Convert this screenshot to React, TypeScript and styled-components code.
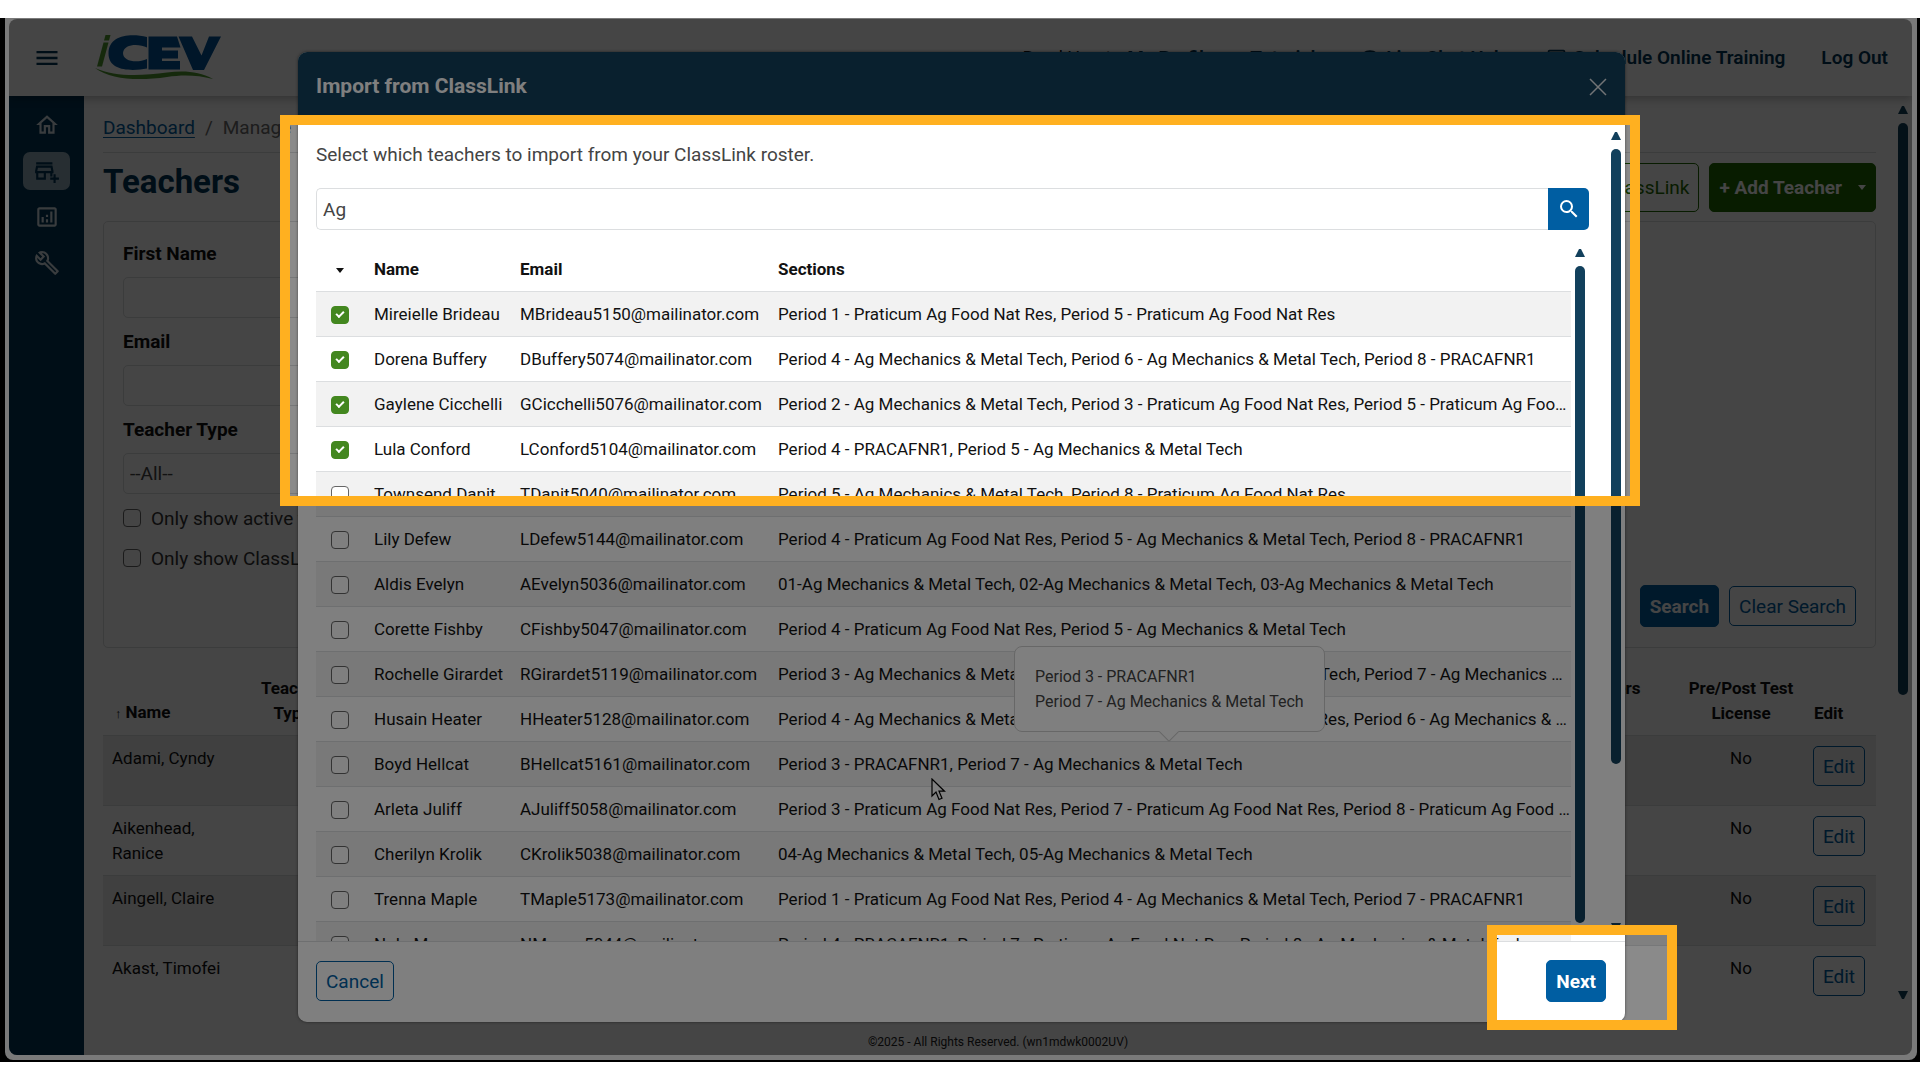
import React from "react";
import styled, { createGlobalStyle, css } from "styled-components";
import {
  MdMenu,
  MdOutlineHome,
  MdOutlineAddBusiness,
  MdOutlineAnalytics,
  MdOutlineBuild,
  MdSearch,
  MdOutlineMonitor,
} from "react-icons/md";
import { FaComment } from "react-icons/fa";

const color = {
  navy: "#003455",
  header: "#12405c",
  blue: "#005ea2",
  green: "#1f6900",
  check: "#43871f",
  line: "#dcdee0",
  stripe: "#f2f2f2",
  accent: "#ffb020",
};

const GlobalStyle = createGlobalStyle`
  *, *::before, *::after { box-sizing: border-box; }
  body {
    margin: 0;
    background: #fff;
    color: #111;
    font: 17px/25px Roboto, "Liberation Sans", sans-serif;
    overflow: hidden;
  }
  button, input, select { font-family: inherit; }
`;

/* ---------- window frame ---------- */

const Stage = styled.div`
  position: relative;
  height: 100vh;
  padding: 18px 0;
`;

const Bezel = styled.div`
  height: 100%;
  padding: 0 3px 2px 5px;
  background: #000;
`;

const Rim = styled.div`
  height: 100%;
  padding: 1px 5px 5px 4px;
  background: #f4f4f4;
  border-radius: 0 0 8px 8px;
`;

const Window = styled.div`
  position: relative;
  display: flex;
  flex-direction: column;
  height: 100%;
  overflow: hidden;
  background: #fff;
  border-radius: 8px;
`;

/* ---------- top bar ---------- */

const TopBar = styled.header`
  display: flex;
  align-items: center;
  flex: 0 0 77px;
  padding: 0 24px;
  box-shadow: 0 3px 8px rgba(0, 0, 0, 0.25);
  z-index: 1;
`;

const IconButton = styled.button`
  display: flex;
  padding: 0;
  border: 0;
  background: none;
  color: ${color.navy};
`;

const Logo = styled.svg`
  width: 128px;
  height: 48px;
  margin-left: 34px;
`;

const TopNav = styled.nav`
  display: flex;
  align-items: center;
  gap: 36px;
  margin-left: auto;
  font-size: 19px;
`;

const UserName = styled.span`
  margin-right: -20px;
  font-size: 18px;
`;

const TopLink = styled.a`
  display: flex;
  align-items: center;
  gap: 7px;
  color: ${color.navy};
  font-weight: 600;
  text-decoration: none;
`;

/* ---------- side bar ---------- */

const Shell = styled.div`
  display: flex;
  flex: 1;
  min-height: 0;
`;

const SideBar = styled.nav`
  display: flex;
  flex-direction: column;
  align-items: center;
  flex: 0 0 75px;
  gap: 8px;
  padding-top: 10px;
  background: ${color.navy};
`;

const SideLink = styled.a<{ $active?: boolean }>`
  display: flex;
  align-items: center;
  justify-content: center;
  width: 47px;
  height: 38px;
  border-radius: 7px;
  font-size: 26px;
  color: ${(p) => (p.$active ? color.navy : "#d5dfe6")};
  background: ${(p) => (p.$active ? "#93abbb" : "transparent")};
`;

/* ---------- page ---------- */

const Main = styled.main`
  display: flex;
  flex-direction: column;
  flex: 1;
  min-width: 0;
`;

const Scroller = styled.div`
  display: flex;
  flex: 1;
  min-height: 0;
`;

const Content = styled.div`
  flex: 1;
  min-width: 0;
  padding: 19px 22px 0 19px;
  overflow: hidden;
`;

const Breadcrumb = styled.nav`
  display: flex;
  gap: 10px;
  padding-bottom: 12px;
  border-bottom: 1px solid ${color.line};
  font-size: 19px;
  color: #6b6b6b;

  a {
    color: ${color.blue};
    text-underline-offset: 3px;
  }
`;

const TitleRow = styled.div`
  display: flex;
  align-items: center;
  gap: 10px;
  height: 68px;
`;

const PageTitle = styled.h1`
  flex: 1;
  margin: 0;
  padding-bottom: 10px;
  font-size: 33px;
  line-height: 40px;
  font-weight: 700;
  color: ${color.navy};
`;

const Button = styled.button<{ $tone?: "blue" | "green"; $solid?: boolean; $tall?: boolean }>`
  display: inline-flex;
  align-items: center;
  gap: 16px;
  height: ${(p) => (p.$tall ? 49 : p.$solid ? 42 : 40)}px;
  padding: 0 9px;
  font-size: 19px;
  font-weight: ${(p) => (p.$solid ? 700 : 400)};
  border-radius: 5px;
  white-space: nowrap;
  ${(p) => {
    const c = p.$tone === "green" ? color.green : color.blue;
    return p.$solid
      ? css`
          color: #fff;
          background: ${c};
          border: 1px solid ${c};
        `
      : css`
          color: ${c};
          background: transparent;
          border: 1px solid ${c};
        `;
  }}
`;

const Caret = styled.span`
  display: inline-block;
  border: 4px solid transparent;
  border-top: 5px solid currentColor;
  border-bottom: 0;
  vertical-align: middle;
`;

const FilterPanel = styled.form`
  display: flex;
  flex-direction: column;
  height: 427px;
  padding: 19px 19px 20px;
  border: 1px solid ${color.line};
  border-radius: 5px;
`;

const Field = styled.label<{ $last?: boolean }>`
  display: flex;
  flex-direction: column;
  gap: 11px;
  width: 30%;
  padding-bottom: ${(p) => (p.$last ? 4 : 11)}px;
  font-size: 19px;
  font-weight: 700;
`;

const controlStyle = css`
  width: 100%;
  height: 41px;
  padding: 0 6px;
  border: 1px solid ${color.line};
  border-radius: 5px;
  background: #fff;
  color: #444;
  font-size: 19px;
  appearance: none;
`;

const TextBox = styled.input`
  ${controlStyle}
`;

const DropDown = styled.select`
  ${controlStyle}
`;

const Tick = styled.input.attrs({ type: "checkbox" })`
  appearance: none;
  display: inline-flex;
  align-items: center;
  justify-content: center;
  width: 18px;
  height: 18px;
  margin: 0;
  border: 1px solid #666;
  border-radius: 4px;
  background: #fff;
  vertical-align: middle;

  &:checked {
    border-color: ${color.check};
    background: ${color.check};
  }

  &:checked::after {
    content: "";
    width: 8px;
    height: 5px;
    margin-bottom: 3px;
    border: solid #fff;
    border-width: 0 0 2px 2px;
    transform: rotate(-45deg);
  }
`;

const TickLabel = styled.label`
  display: flex;
  align-items: center;
  gap: 10px;
  height: 40px;
  font-size: 19px;
  color: #333;
`;

const FilterActions = styled.div`
  display: flex;
  align-items: center;
  justify-content: flex-end;
  gap: 10px;
  margin-top: auto;
`;

const TeacherTable = styled.table`
  width: 100%;
  margin-top: 24px;
  border-collapse: separate;
  border-spacing: 0;
  table-layout: fixed;

  th {
    padding: 4px 8px 9px;
    text-align: center;
    vertical-align: bottom;
    font-weight: 700;
  }

  th:first-child,
  th:last-child,
  td:first-child {
    text-align: left;
  }

  th:last-child {
    padding-left: 12px;
  }

  td {
    height: 70px;
    padding: 10px 9px 9px;
    border-top: 1px solid ${color.line};
    text-align: center;
    vertical-align: top;
  }

  tbody tr:nth-child(odd) {
    background: #ececec;
  }
`;

const SortMark = styled.span`
  display: inline-block;
  margin: 0 4px;
  font-size: 13px;
`;

const Footer = styled.footer`
  flex: 0 0 53px;
  padding-top: 28px;
  text-align: center;
  font-size: 12px;
  color: #222;
`;

/* ---------- scroll bars ---------- */

const Track = styled.div<{ $top: number; $bottom?: number }>`
  display: flex;
  flex-direction: column;
  align-items: center;
  flex: 0 0 10px;
  gap: 9px;
  padding-top: ${(p) => p.$top}px;
  padding-bottom: ${(p) => p.$bottom ?? 0}px;
`;

const ArrowMark = styled.i<{ $down?: boolean }>`
  flex: none;
  width: 10px;
  height: 8px;
  background: ${color.header};
  clip-path: ${(p) =>
    p.$down ? "polygon(0 0, 100% 0, 60% 100%, 40% 100%)" : "polygon(40% 0, 60% 0, 100% 100%, 0 100%)"};
`;

const Thumb = styled.i<{ $share: number }>`
  flex: 0 0 ${(p) => p.$share}%;
  width: 10px;
  border-radius: 5px;
  background: ${color.header};
`;

const Spring = styled.i`
  flex: 1;
`;

const PageTrack = styled(Track)`
  margin-right: 4px;
`;

/* ---------- dialog ---------- */

const Backdrop = styled.div`
  position: absolute;
  inset: 0;
  z-index: 2;
  display: flex;
  justify-content: center;
  padding: 33px 32px 33px 34px;
  background: rgba(0, 0, 0, 0.46);
`;

const Dialog = styled.section`
  position: relative;
  display: flex;
  flex-direction: column;
  width: 100%;
  max-width: 1327px;
  overflow: hidden;
  background: #fff;
  border-radius: 9px;
  box-shadow: 0 0 3px rgba(0, 0, 0, 0.5);
`;

const DialogHeader = styled.header`
  display: flex;
  align-items: center;
  justify-content: space-between;
  flex: 0 0 69px;
  padding: 0 18px;
  background: ${color.header};
  color: #fff;

  h2 {
    margin: 0;
    font-size: 21px;
    font-weight: 700;
  }
`;

const CloseIcon = styled.svg`
  width: 18px;
  height: 18px;
  color: #e4e9ec;
`;

const DialogBody = styled.div`
  display: flex;
  flex: 1;
  min-height: 0;
`;

const DialogContent = styled.div`
  display: flex;
  flex-direction: column;
  flex: 1;
  min-width: 0;
  padding: 21px 22px 0 18px;
`;

const Intro = styled.p`
  margin: 0 0 21px;
  font-size: 19px;
  color: #444;
`;

const SearchBar = styled.form`
  display: flex;
  flex: none;
  margin-bottom: 17px;

  input {
    height: 42px;
    border-right: 0;
    border-radius: 5px 0 0 5px;
  }

  button {
    display: flex;
    align-items: center;
    justify-content: center;
    flex: 0 0 41px;
    padding: 0;
    border: 0;
    border-radius: 0 5px 5px 0;
    background: ${color.blue};
    color: #fff;
    font-size: 24px;
  }
`;

const RosterArea = styled.div`
  display: flex;
  flex: 1;
  gap: 4px;
  min-height: 0;
  padding-right: 4px;
`;

const RosterClip = styled.div`
  flex: 1;
  min-width: 0;
  overflow: hidden;
`;

const Roster = styled.table`
  width: 100%;
  border-collapse: separate;
  border-spacing: 0;
  table-layout: fixed;

  th,
  td {
    height: 45px;
    padding: 0 1px 0 10px;
    border-bottom: 1px solid ${color.line};
    text-align: left;
    white-space: nowrap;
    overflow: hidden;
    text-overflow: ellipsis;
  }

  th:first-child,
  td:first-child {
    padding: 0;
    text-align: center;
  }

  th {
    font-weight: 700;
  }

  tbody tr:nth-child(odd) {
    background: ${color.stripe};
  }
`;

const DialogTrack = styled(Track)`
  margin-right: 4px;
`;

const DialogFooter = styled.footer`
  display: flex;
  align-items: center;
  justify-content: space-between;
  flex: 0 0 81px;
  padding: 0 19px 2px 18px;
  border-top: 1px solid ${color.line};
`;

const Tooltip = styled.div`
  position: absolute;
  left: 716px;
  top: 594px;
  padding: 17px 20px;
  border: 1px solid #cfcfcf;
  border-radius: 8px;
  background: #fff;
  color: #444;
  font-size: 16px;

  &::after {
    content: "";
    position: absolute;
    left: 50%;
    bottom: -8px;
    width: 14px;
    height: 14px;
    margin-left: -7px;
    background: #fff;
    border: solid #cfcfcf;
    border-width: 0 1px 1px 0;
    transform: rotate(45deg);
  }
`;

const Pointer = styled.svg`
  position: absolute;
  left: 633px;
  top: 726px;
  width: 15px;
  height: 23px;
`;

/* ---------- walkthrough overlay ---------- */

type Spot = { x: number; y: number; w: number; h: number };

const spots: Spot[] = [
  { x: 280, y: 115, w: 1360, h: 391 },
  { x: 1487, y: 925, w: 190, h: 105 },
];

const holes = spots
  .map(({ x, y, w, h }) => `M${x} ${y - 18}h${w}v${h}h${-w}z`)
  .join(" ");

const Shade = styled.div`
  position: absolute;
  inset: 18px 0;
  z-index: 3;
  background: rgba(0, 0, 0, 0.5);
  clip-path: path(evenodd, "M0 0H4000V4000H0z ${holes}");
  pointer-events: none;
`;

const SpotFrame = styled.div<{ $spot: Spot }>`
  position: absolute;
  z-index: 4;
  left: ${(p) => p.$spot.x}px;
  top: ${(p) => p.$spot.y}px;
  width: ${(p) => p.$spot.w}px;
  height: ${(p) => p.$spot.h}px;
  border: 10px solid ${color.accent};
  pointer-events: none;
`;

/* ---------- data ---------- */

const roster: [string, string, string, boolean?][] = [
  ["Mireielle Brideau", "MBrideau5150", "Period 1 - Praticum Ag Food Nat Res, Period 5 - Praticum Ag Food Nat Res", true],
  ["Dorena Buffery", "DBuffery5074", "Period 4 - Ag Mechanics & Metal Tech, Period 6 - Ag Mechanics & Metal Tech, Period 8 - PRACAFNR1", true],
  ["Gaylene Cicchelli", "GCicchelli5076", "Period 2 - Ag Mechanics & Metal Tech, Period 3 - Praticum Ag Food Nat Res, Period 5 - Praticum Ag Food Nat Res", true],
  ["Lula Conford", "LConford5104", "Period 4 - PRACAFNR1, Period 5 - Ag Mechanics & Metal Tech", true],
  ["Townsend Danit", "TDanit5040", "Period 5 - Ag Mechanics & Metal Tech, Period 8 - Praticum Ag Food Nat Res"],
  ["Lily Defew", "LDefew5144", "Period 4 - Praticum Ag Food Nat Res, Period 5 - Ag Mechanics & Metal Tech, Period 8 - PRACAFNR1"],
  ["Aldis Evelyn", "AEvelyn5036", "01-Ag Mechanics & Metal Tech, 02-Ag Mechanics & Metal Tech, 03-Ag Mechanics & Metal Tech"],
  ["Corette Fishby", "CFishby5047", "Period 4 - Praticum Ag Food Nat Res, Period 5 - Ag Mechanics & Metal Tech"],
  ["Rochelle Girardet", "RGirardet5119", "Period 3 - Ag Mechanics & Metal Tech, Period 5 - Ag Mechanics & Metal Tech, Period 7 - Ag Mechanics & Metal Tech"],
  ["Husain Heater", "HHeater5128", "Period 4 - Ag Mechanics & Metal Tech, Period 5 - Praticum Ag Food Nat Res, Period 6 - Ag Mechanics & Metal Tech"],
  ["Boyd Hellcat", "BHellcat5161", "Period 3 - PRACAFNR1, Period 7 - Ag Mechanics & Metal Tech"],
  ["Arleta Juliff", "AJuliff5058", "Period 3 - Praticum Ag Food Nat Res, Period 7 - Praticum Ag Food Nat Res, Period 8 - Praticum Ag Food Nat Res"],
  ["Cherilyn Krolik", "CKrolik5038", "04-Ag Mechanics & Metal Tech, 05-Ag Mechanics & Metal Tech"],
  ["Trenna Maple", "TMaple5173", "Period 1 - Praticum Ag Food Nat Res, Period 4 - Ag Mechanics & Metal Tech, Period 7 - PRACAFNR1"],
  ["Nola Mason", "NMason5044", "Period 4 - PRACAFNR1, Period 7 - Praticum Ag Food Nat Res, Period 8 - Ag Mechanics & Metal Tech"],
];

const teachers = ["Adami, Cyndy", "Aikenhead, Ranice", "Aingell, Claire", "Akast, Timofei"];

const ScrollMarks = ({ share }: { share: number }) => (
  <>
    <ArrowMark />
    <Thumb $share={share} />
    <Spring />
    <ArrowMark $down />
  </>
);

const IcevLogo = () => (
  <Logo viewBox="0 0 128 48" role="img" aria-label="iCEV">
    <g fill="#4f9a2f">
      <path d="M10.500 1h5L14 6.500H9z" />
      <path d="M8.500 8.500h5L7 32.500H2z" />
      <path d="M0 34C20 43 46 42 72 38.500c18-2 32-1 46 6.500C102 41 88 40.500 72 43 44 47 16 46 0 34z" />
    </g>
    <g fill="#00549a">
      <path d="M52 3v10.500C44 9.500 29 9.500 28 19c0 8.500 14 10.500 24 6v9.500C36 37.500 13.500 37 13.500 19.500 13.500 1 35-1 52 3z" />
      <path d="M53.500 2.500H82l3.500 11H67v3h16v8H67v2.500h18v8.500H53.500z" />
      <path d="M83.500 2.500H97l9.500 19L114 2.500h12L109 36H98z" />
    </g>
  </Logo>
);

export default function App() {
  return (
    <Stage>
      <GlobalStyle />
      <Bezel>
        <Rim>
          <Window>
            <TopBar>
              <IconButton aria-label="Menu">
                <MdMenu size={28} />
              </IconButton>
              <IcevLogo />
              <TopNav>
                <UserName>Reed Hurst</UserName>
                <TopLink href="#profile">My Profile</TopLink>
                <TopLink href="#tutorials">Tutorials</TopLink>
                <TopLink href="#chat">
                  <FaComment size={18} />
                  Live Chat Help
                </TopLink>
                <TopLink href="#training">
                  <MdOutlineMonitor size={21} />
                  Schedule Online Training
                </TopLink>
                <TopLink href="#logout">Log Out</TopLink>
              </TopNav>
            </TopBar>

            <Shell>
              <SideBar aria-label="Sections">
                <SideLink href="#home" aria-label="Home"><MdOutlineHome /></SideLink>
                <SideLink href="#manage" aria-label="Manage" $active><MdOutlineAddBusiness /></SideLink>
                <SideLink href="#reports" aria-label="Reports"><MdOutlineAnalytics /></SideLink>
                <SideLink href="#tools" aria-label="Tools"><MdOutlineBuild /></SideLink>
              </SideBar>

              <Main>
                <Scroller>
                  <Content>
                    <Breadcrumb>
                      <a href="#dashboard">Dashboard</a>
                      <span>/</span>
                      <span>Manage Teachers</span>
                    </Breadcrumb>
                    <TitleRow>
                      <PageTitle>Teachers</PageTitle>
                      <Button $tone="green" $tall>Import from ClassLink</Button>
                      <Button $tone="green" $solid $tall>
                        + Add Teacher <Caret />
                      </Button>
                    </TitleRow>
                    <FilterPanel>
                      <Field>First Name<TextBox type="text" /></Field>
                      <Field>Email<TextBox type="text" /></Field>
                      <Field $last>
                        Teacher Type
                        <DropDown defaultValue="all">
                          <option value="all">--All--</option>
                        </DropDown>
                      </Field>
                      <TickLabel><Tick />Only show active teachers</TickLabel>
                      <TickLabel><Tick />Only show ClassLink teachers</TickLabel>
                      <FilterActions>
                        <Button type="button" $solid>Search</Button>
                        <Button type="reset">Clear Search</Button>
                      </FilterActions>
                    </FilterPanel>

                    <TeacherTable>
                      <colgroup>
                        <col style={{ width: 140 }} />
                        <col style={{ width: 98 }} />
                        <col />
                        <col style={{ width: 160 }} />
                        <col style={{ width: 122 }} />
                        <col style={{ width: 74 }} />
                      </colgroup>
                      <thead>
                        <tr>
                          <th><SortMark>↑</SortMark>Name</th>
                          <th>Teacher Type</th>
                          <th />
                          <th>Max Users<br />Left</th>
                          <th>Pre/Post Test License</th>
                          <th>Edit</th>
                        </tr>
                      </thead>
                      <tbody>
                        {teachers.map((name) => (
                          <tr key={name}>
                            <td>{name}</td>
                            <td />
                            <td />
                            <td />
                            <td>No</td>
                            <td><Button>Edit</Button></td>
                          </tr>
                        ))}
                      </tbody>
                    </TeacherTable>
                  </Content>
                  <PageTrack $top={10} $bottom={3}>
                    <ScrollMarks share={64} />
                  </PageTrack>
                </Scroller>
                <Footer>©2025 - All Rights Reserved. (wn1mdwk0002UV)</Footer>
              </Main>
            </Shell>

            <Backdrop>
              <Dialog role="dialog" aria-labelledby="import-title">
                <DialogHeader>
                  <h2 id="import-title">Import from ClassLink</h2>
                  <IconButton aria-label="Close">
                    <CloseIcon viewBox="0 0 18 18" stroke="currentColor" strokeWidth="1.5">
                      <path d="M1 1l16 16M17 1L1 17" />
                    </CloseIcon>
                  </IconButton>
                </DialogHeader>
                <DialogBody>
                  <DialogContent>
                    <Intro>Select which teachers to import from your ClassLink roster.</Intro>
                    <SearchBar>
                      <TextBox type="text" aria-label="Search teachers" defaultValue="Ag" />
                      <button type="button" aria-label="Search"><MdSearch /></button>
                    </SearchBar>
                    <RosterArea>
                      <RosterClip>
                        <Roster>
                          <colgroup>
                            <col style={{ width: 48 }} />
                            <col style={{ width: 146 }} />
                            <col style={{ width: 258 }} />
                            <col />
                          </colgroup>
                          <thead>
                            <tr>
                              <th><Caret /></th>
                              <th>Name</th>
                              <th>Email</th>
                              <th>Sections</th>
                            </tr>
                          </thead>
                          <tbody>
                            {roster.map(([name, mail, sections, on]) => (
                              <tr key={mail}>
                                <td><Tick aria-label={`Import ${name}`} defaultChecked={on} /></td>
                                <td>{name}</td>
                                <td>{mail}@mailinator.com</td>
                                <td>{sections}</td>
                              </tr>
                            ))}
                          </tbody>
                        </Roster>
                      </RosterClip>
                      <Track $top={2}>
                        <ArrowMark />
                        <Thumb $share={95} />
                      </Track>
                    </RosterArea>
                  </DialogContent>
                  <DialogTrack $top={11} $bottom={10}>
                    <ScrollMarks share={77} />
                  </DialogTrack>
                </DialogBody>
                <DialogFooter>
                  <Button>Cancel</Button>
                  <Button $solid>Next</Button>
                </DialogFooter>
                <Tooltip role="tooltip">
                  Period 3 - PRACAFNR1
                  <br />
                  Period 7 - Ag Mechanics &amp; Metal Tech
                </Tooltip>
                <Pointer viewBox="0 0 15 23">
                  <path
                    d="M1 1v17l4-4 3 7.500 3-1.300-3-7h5.500z"
                    fill="#fff"
                    stroke="#000"
                    strokeWidth="1.200"
                  />
                </Pointer>
              </Dialog>
            </Backdrop>
          </Window>
        </Rim>
      </Bezel>
      <Shade />
      {spots.map((spot) => (
        <SpotFrame key={spot.x} $spot={spot} />
      ))}
    </Stage>
  );
}
